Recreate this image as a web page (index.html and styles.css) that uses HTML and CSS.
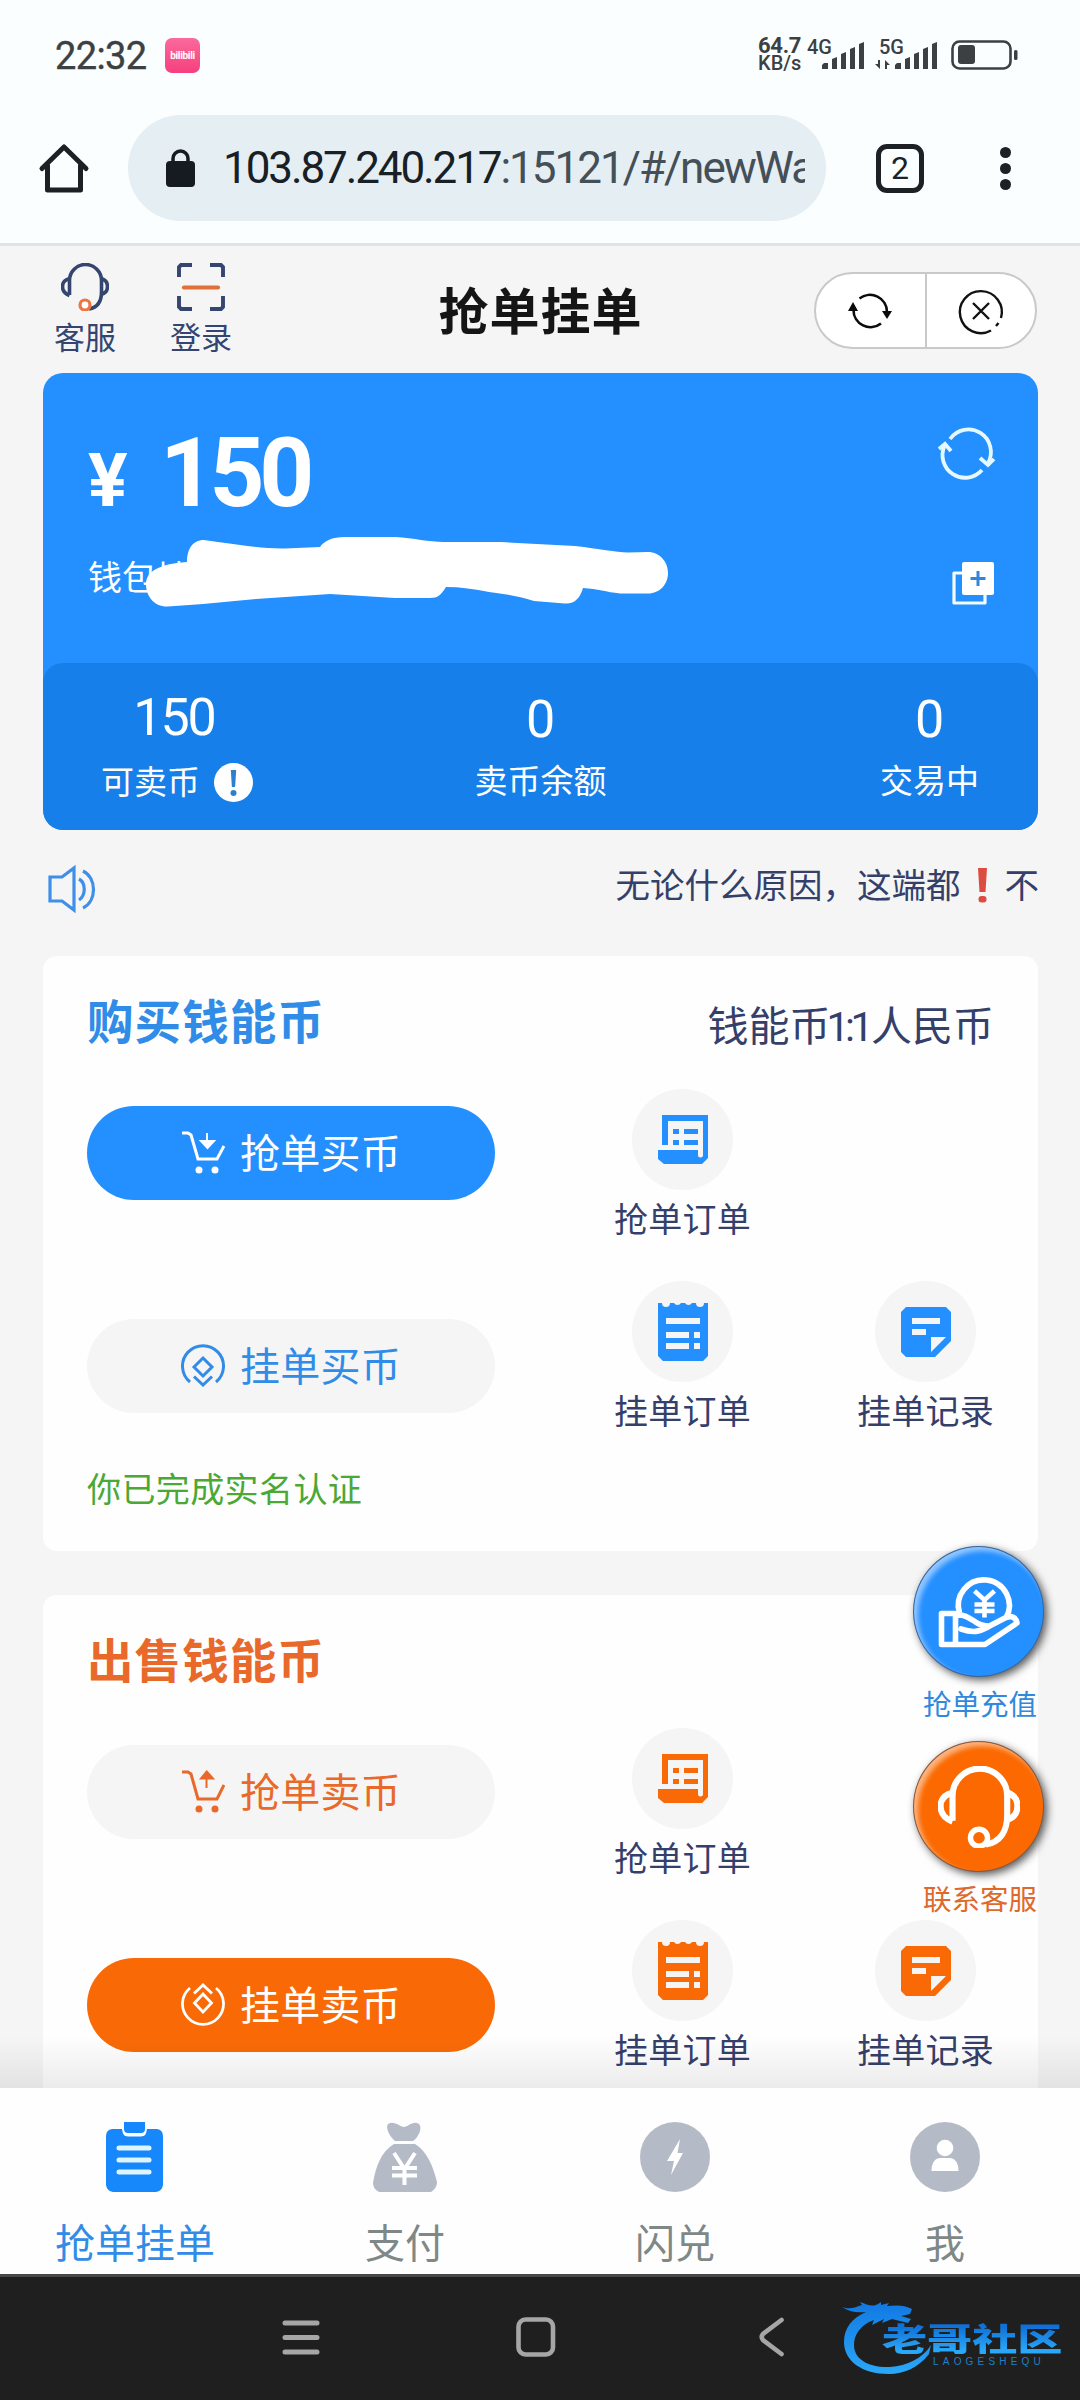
FILE: index.html
```html
<!DOCTYPE html>
<html lang="zh-CN">
<head>
<meta charset="utf-8">
<title>抢单挂单</title>
<link rel="stylesheet" href="styles.css">
</head>
<body>
<svg class="defs" width="0" height="0" aria-hidden="true">
  <symbol id="headset" viewBox="0 0 48 48">
    <path d="M8.500 32V17.500a15.500 15.500 0 0 1 32 0V29c0 9-4 15.500-12.500 17M8.500 15.500C3 17 1.500 20 1.500 23.500s2 7 7 9M40.500 15.500c4.500 1.500 6 4.500 6 8s-1.500 6.500-6 8" fill="none" stroke="currentColor" stroke-width="3.600"/>
    <circle cx="24" cy="42" r="5" fill="var(--mic-fill)" stroke="var(--mic)" stroke-width="3.200"/>
  </symbol>
  <symbol id="cart-in" viewBox="0 0 44 43">
    <path d="M1 2h6l3 2 7 24h19l7-13" fill="none" stroke="currentColor" stroke-width="3"/>
    <path d="M26 2v9M20 10h13l-6.500 7z" fill="currentColor" stroke="currentColor" stroke-width="2"/>
    <circle cx="18" cy="39" r="3.500" fill="currentColor"/><circle cx="34" cy="39" r="3.500" fill="currentColor"/>
  </symbol>
  <symbol id="cart-out" viewBox="0 0 44 43">
    <path d="M1 2h6l3 2 7 25h19l7-14" fill="none" stroke="currentColor" stroke-width="3"/>
    <path d="M25.500 18V8M20 8.500h12L25.700 1.500z" fill="currentColor" stroke="currentColor" stroke-width="2"/>
    <circle cx="18" cy="39" r="3.500" fill="currentColor"/><circle cx="34" cy="39" r="3.500" fill="currentColor"/>
  </symbol>
  <symbol id="coin-in" viewBox="0 0 44 43">
    <path d="M9 38A20.500 20.500 0 1 1 35 38M22 14l9 9-9 9-9-9zM13 32.500l9 8.500 9-8.500" fill="none" stroke="currentColor" stroke-width="3"/>
  </symbol>
  <symbol id="coin-out" viewBox="0 0 44 43">
    <path d="M9 5A20.500 20.500 0 1 0 35 5M22 11l8.500 9-8.500 9-8.500-9zM13 10.500L22 2l9 8.500" fill="none" stroke="currentColor" stroke-width="2.800"/>
  </symbol>
  <symbol id="scroll" viewBox="0 0 50 49">
    <path fill="currentColor" fill-rule="evenodd" d="M4 0h46v43l-6 6H6l-6-5V35h40v5a2.500 2.500 0 0 0 5 0V6H10v24H4zM15 14h6v5h-6zM26 14h14v5H26zM15 25h6v5h-6zM26 25h14v5H26z"/>
  </symbol>
  <symbol id="receipt" viewBox="0 0 50 58">
    <path fill="currentColor" fill-rule="evenodd" d="M0 0h4a4 4 0 0 0 8 0h4a4 4 0 0 0 7 0h4a4 4 0 0 0 7 0h4a4 4 0 0 0 8 0h4v53l-5 5H5l-5-5zM8 15v6h34v-6zM8 29v6h23v-6zM36 29v6h6v-6zM8 40v6h23v-6zM36 40v6h6v-6z"/>
  </symbol>
  <symbol id="note" viewBox="0 0 50 50">
    <path fill="currentColor" fill-rule="evenodd" d="M5 0h40l5 5v29L34 50H5l-5-5V5zM11 11v6h28v-6zM11 22v6h14v-6zM30 45l15-15H30z"/>
  </symbol>
</svg>

<div class="screen">
  <div class="statusbar">
    <span class="clock">22:32</span>
    <span class="app-icon">bilibili</span>
    <span class="speed"><b>64.7</b><b>KB/s</b></span>
    <svg class="signals" width="133" height="34" viewBox="0 0 133 34">
      <g fill="#3c4043">
        <text x="0" y="16" class="net">4G</text><text x="72" y="16" class="net">5G</text>
        <path d="M15 31v-4l2-2h4v6zM25 31V21l5-2v12zM34 31V16l5-2v17zM43 31V11l5-2v22zM52 31V6l5-2v27z"/>
        <path d="M88 31v-4l2-2h4v6zM98 31V21l5-2v12zM107 31V16l5-2v17zM116 31V11l5-2v22zM125 31V6l5-2v27z"/>
        <path d="M73 22v9l-5-5h3v-4zM78 31v-9l5 5h-3v4z"/>
      </g>
    </svg>
    <svg class="battery" width="68" height="30" viewBox="0 0 68 30">
      <rect x="1.500" y="1.500" width="58" height="27" rx="7" fill="none" stroke="#3c4043" stroke-width="2.600"/>
      <rect x="7" y="5" width="17" height="19" rx="3" fill="#3c4043"/><rect x="63" y="10" width="3.500" height="10" rx="1.500" fill="#3c4043"/>
    </svg>
  </div>

  <div class="browserbar">
    <svg class="home" width="50" height="50" viewBox="0 0 50 50"><path d="M3 25.500L25 4l22 21.500M8.500 22v25h33V22" fill="none" stroke="#1d2125" stroke-width="5" stroke-linejoin="round" stroke-linecap="round"/></svg>
    <div class="address">
      <svg width="30" height="38" viewBox="0 0 30 38"><rect x="0" y="12" width="29" height="26" rx="4" fill="#151b20"/><path d="M7 14V9.500a7.500 7.500 0 0 1 15 0V14" fill="none" stroke="#151b20" stroke-width="3.500"/></svg>
      <div class="url"><span class="host">103.87.240.217</span><span class="path">:15121/#/newWa</span></div>
    </div>
    <div class="tabcount">2</div>
    <div class="dots"><i></i><i></i><i></i></div>
  </div>

  <main class="page">
    <header class="header">
      <div class="shortcuts">
        <div class="shortcut"><svg class="mic-orange" width="48" height="48"><use href="#headset"/></svg><span>客服</span></div>
        <div class="shortcut"><svg width="48" height="48" viewBox="0 0 48 48"><path d="M2 14V4l2-2h11M33 2h11l2 2v10M46 33v11l-2 2H33M15 46H4l-2-2V33" fill="none" stroke="#34456f" stroke-width="3.900"/><path d="M7 24.500h34" stroke="#df7039" stroke-width="4.200" stroke-linecap="round"/></svg><span>登录</span></div>
      </div>
      <h1>抢单挂单</h1>
      <div class="capsule">
        <span><svg width="44" height="44" viewBox="0 0 44 44"><g fill="none" stroke="#0b0b0b" stroke-width="2.600"><path d="M11.500 9.500A17 17 0 0 1 39 23"/><path d="M33 34.500A17 17 0 0 1 5.500 21"/></g><path d="M34 22h10l-5 8zM0 22h10l-5-9z" fill="#0b0b0b"/></svg></span>
        <span><svg width="46" height="46" viewBox="0 0 46 46"><path d="M33 42.500A21 21 0 1 1 43 30M38 38l2.500-3M15 15l16 16M31 15L15 31" fill="none" stroke="#111" stroke-width="2.400"/></svg></span>
      </div>
    </header>

    <section class="balance">
      <div class="balance-main">
        <div class="balance-info">
          <div class="amount"><span class="yen">¥</span><span class="sum">150</span></div>
          <div class="wallet">钱包地
            <svg class="scribble" width="524" height="72" viewBox="146 536 524 72"><path fill="#fff" d="M146 584C146 572 158 564 187 562C187 550 192 540 204 540C235 544 260 549 285 548.500L320 547C324 541 332 537 345 537H395C415 538 428 542 444 542H501L575 546C600 549 615 552 628 552.500L648 552C660 552 668 562 668 573S660 593.500 648 593.500H620C606 592 598 589 583 588C580 598 575 604 565 603.500L534 601C518 596 505 594 489 592C475 589 460 587 446 587C441 595 438 598 430 598H395L330 594L256 599L203 604L168 606.500C154 607 146 596 146 584Z"/></svg>
          </div>
        </div>
        <div class="balance-tools">
          <svg width="56" height="50" viewBox="0 0 56 50"><g fill="none" stroke="#e4f8ff" stroke-width="3.800"><path d="M12 9A22.500 22.500 0 0 1 50 33M44 40A22.500 22.500 0 0 1 6.500 16"/><path d="M42 28l8 7 6-6M1 19l6-5 6 7"/></g></svg>
          <svg width="42" height="43" viewBox="0 0 42 43"><path d="M10 11H2v30h31v-9" fill="none" stroke="#f2fcff" stroke-width="3.200" stroke-linejoin="round"/><rect x="10" y="0" width="32" height="33" rx="2" fill="#fff"/><path d="M26 9v15M18.500 16.500h15" stroke="#2f86dc" stroke-width="3"/></svg>
        </div>
      </div>
      <div class="stats">
        <div class="stat first"><b class="n150">150</b><span>可卖币<i class="info"><svg width="39" height="39" viewBox="0 0 39 39"><circle cx="19.500" cy="19.500" r="19.500" fill="#fff"/><path d="M16.800 7h5.400l-1.100 17h-3.200z" fill="#2f7fd0"/><circle cx="19.500" cy="30" r="3" fill="#2f7fd0"/></svg></i></span></div>
        <div class="stat"><b>0</b><span>卖币余额</span></div>
        <div class="stat last"><b>0</b><span>交易中</span></div>
      </div>
    </section>

    <div class="notice">
      <svg width="48" height="46" viewBox="0 0 48 46"><path d="M2 11h12L26 2v42L14 35H2zM31 13c7 4 7 16 0 21M35 5c14 7 14 30 0 37" fill="none" stroke="#3f8fe8" stroke-width="3.200"/></svg>
      <p>无论什么原因，这端都<svg class="bang" width="44" height="35" viewBox="0 0 44 35"><path d="M17 0h9l-1.500 24h-6z" fill="#dc4c41"/><rect x="17.500" y="28" width="8" height="6.500" rx="3" fill="#dc4c41"/></svg>不</p>
    </div>

    <section class="trade buy">
      <div class="trade-head"><h2>购买钱能币</h2><span>钱能币<em>1:1</em>人民币</span></div>
      <div class="row">
        <div class="btn solid"><svg width="44" height="43"><use href="#cart-in"/></svg>抢单买币</div>
        <div class="link"><i><svg width="50" height="49"><use href="#scroll"/></svg></i>抢单订单</div>
      </div>
      <div class="row second">
        <div class="btn"><svg width="44" height="43"><use href="#coin-in"/></svg>挂单买币</div>
        <div class="link"><i><svg width="50" height="58"><use href="#receipt"/></svg></i>挂单订单</div>
        <div class="link"><i><svg width="50" height="50"><use href="#note"/></svg></i>挂单记录</div>
      </div>
      <p class="verified">你已完成实名认证</p>
    </section>

    <section class="trade sell">
      <div class="trade-head"><h2>出售钱能币</h2></div>
      <div class="row">
        <div class="btn"><svg width="44" height="43"><use href="#cart-out"/></svg>抢单卖币</div>
        <div class="link"><i><svg width="50" height="49"><use href="#scroll"/></svg></i>抢单订单</div>
      </div>
      <div class="row second">
        <div class="btn solid"><svg width="44" height="43"><use href="#coin-out"/></svg>挂单卖币</div>
        <div class="link"><i><svg width="50" height="58"><use href="#receipt"/></svg></i>挂单订单</div>
        <div class="link"><i><svg width="50" height="50"><use href="#note"/></svg></i>挂单记录</div>
      </div>
    </section>

    <div class="shade"></div>

    <aside class="floats">
      <div class="float recharge">
        <i><svg width="80" height="73" viewBox="0 0 80 73"><g fill="none" stroke="#fff" stroke-width="5.600" stroke-linejoin="round"><path d="M20.500 38A25.500 25.500 0 1 1 67 43"/><path d="M2.500 38.500h14v31h-14zM16.500 40c9-1 14 3 20 7 4 3 7 4 14 4L66 43c6-3 11-1 12 5L46 69.500H16.500"/><path d="M22 54c12 4 18 3 27-2" stroke-linecap="round"/></g><path d="M35.500 16l10 9 10-9M35.500 29.500h20M35.500 36h20M45.500 25v17.500" fill="none" stroke="#fff" stroke-width="4.600"/></svg></i>
        <span>抢单充值</span>
      </div>
      <div class="float contact">
        <i><svg width="82" height="84" viewBox="0 0 48 48"><use href="#headset" width="48" height="48"/></svg></i>
        <span>联系客服</span>
      </div>
    </aside>
  </main>

  <nav class="tabbar">
    <div class="tab active"><svg width="57" height="70" viewBox="0 0 57 70"><path d="M6 7h10c1 7 3 7.500 8 7.500h9c5 0 7-.5 8-7.500h10q6 1 6 7v49q-1 6-7 7H7q-6-1-7-7V14q0-6 6-7z" fill="#1688fb"/><path d="M18 0h21v7q0 4-4 4H22q-4 0-4-4z" fill="#1688fb"/><path d="M13 26h30M13 38h30M13 50h30" stroke="#dcf5ff" stroke-width="5" stroke-linecap="round"/></svg><span>抢单挂单</span></div>
    <div class="tab"><svg width="64" height="70" viewBox="0 0 64 70"><path d="M15 2c6-4 12 3 16 3s9-7 15-3c4 4-1 14-6 17H22C17 15 12 6 15 2zM21 22h21c12 7 18 22 22 38 0 5-3 8-6 10H6c-4-2-6-5-6-9 3-17 8-31 21-39z" fill="#b5bac7"/><path d="M21 31l10.500 16L42 31M19 46h25M19 53.500h25M31.500 46v17" fill="none" stroke="#fff" stroke-width="4"/></svg><span>支付</span></div>
    <div class="tab"><svg width="70" height="70" viewBox="0 0 70 70"><circle cx="35" cy="35" r="35" fill="#b5bac7"/><path d="M40 17l-13 22h7l-3 14 12-22h-5.500z" fill="#fff"/></svg><span>闪兑</span></div>
    <div class="tab"><svg width="70" height="70" viewBox="0 0 70 70"><circle cx="35" cy="35" r="35" fill="#b5bac7"/><circle cx="35" cy="26" r="8.300" fill="#fff"/><path d="M21.500 49c0-9 4-13 9-13h9c5 0 9 4 9 13z" fill="#fff"/></svg><span>我</span></div>
  </nav>

  <div class="sysnav">
    <svg width="38" height="36" viewBox="0 0 38 36"><path d="M3 4h32M3 18.500h32M3 33h32" stroke="#a6a6a6" stroke-width="5" stroke-linecap="round"/></svg>
    <svg width="40" height="40" viewBox="0 0 40 40"><rect x="2.500" y="2.500" width="34.500" height="35" rx="7" fill="none" stroke="#a6a6a6" stroke-width="4.600"/></svg>
    <svg width="26" height="40" viewBox="0 0 26 40"><path d="M22.500 3L4 17q-2.500 3 0 6l18.500 14" fill="none" stroke="#a6a6a6" stroke-width="4.600" stroke-linecap="round"/></svg>
    <div class="brand">
      <svg width="92" height="72" viewBox="0 0 92 72"><defs><linearGradient id="dragon" x1="0" y1="0" x2="0" y2="1"><stop offset="0" stop-color="#1178e2"/><stop offset="1" stop-color="#2aa8f8"/></linearGradient></defs>
        <path fill="url(#dragon)" d="M0 6c8 3 14 0 20-2l-2-3c8 3 12 5 18 2l3-2v3l8-2-2 3c10-1 18-1 25 3l-2 5-9 2 10 3-3 4-16-4-10 4 2-4-12 6 2-5C18 24 12 34 12 44c0 15 16 23 36 22 17-1 33-9 41-22l-2 9C76 67 62 73 47 73 20 73 2 60 2 41 2 27 10 17 24 11 15 12 8 11 0 6z"/></svg>
      <div class="brand-text"><b>老哥社区</b><small>LAOGESHEQU</small></div>
    </div>
  </div>
</div>
</body>
</html>
```

FILE: styles.css
```css
* { box-sizing: border-box; margin: 0; padding: 0; }
body { width: 1080px; height: 2400px; overflow: hidden; background: #f5f5f5; font-family: "Noto Sans CJK SC", sans-serif; color: #34406a; }
i, em { font-style: normal; }
svg { display: block; flex: none; overflow: visible; }
.defs { position: absolute; }
.screen { display: flex; flex-direction: column; width: 1080px; height: 2400px; }

/* status bar */
.statusbar { display: flex; align-items: flex-start; height: 108px; flex: none; padding: 38px 0 0 55px; background: #fafeff; color: #3c4043; font-family: Roboto, sans-serif; }
.clock { width: 110px; font-size: 38px; line-height: 36px; letter-spacing: -.6px; -webkit-text-stroke: .4px #3c4043; }
.app-icon { width: 35px; height: 35px; border-radius: 7px; background: linear-gradient(#fb6a9c, #f63f7d); color: #fff; font-size: 10px; font-weight: 700; line-height: 36px; text-align: center; letter-spacing: -.3px; }
.speed { display: flex; flex-direction: column; width: 49px; margin-left: 558px; }
.speed b { font-size: 22px; line-height: 16px; letter-spacing: -.3px; font-weight: 700; }
.speed b + b { font-size: 20px; font-weight: 500; line-height: 18px; letter-spacing: 0; }
.net { font: 500 20px Roboto, sans-serif; }
.battery { margin: 2px 0 0 11px; }

/* browser bar */
.browserbar { display: flex; align-items: center; height: 138px; flex: none; padding: 0 0 15px 39px; background: #fafeff; border-bottom: 3px solid #dde3e8; }
.address { display: flex; align-items: center; width: 698px; height: 106px; margin-left: 39px; padding: 0 21px 0 38px; border-radius: 53px; background: #e4eef3; }
.url { flex: 1; margin-left: 27px; overflow: hidden; white-space: nowrap; font-family: Roboto, sans-serif; font-size: 44px; line-height: 60px; }
.host { color: #182025; letter-spacing: -2.100px; }
.path { color: #454f57; letter-spacing: -2px; }
.tabcount { width: 48px; height: 49px; margin-left: 50px; border: 5px solid #1d2125; border-radius: 11px; font: 32px/39px Roboto, sans-serif; color: #1d2125; text-align: center; }
.dots { display: flex; flex-direction: column; gap: 5px; margin-left: 76px; }
.dots i { width: 11px; height: 11px; border-radius: 50%; background: #1d2125; }

/* page */
.page { position: relative; height: 1842px; flex: none; overflow: hidden; }
.header { display: grid; grid-template-columns: 1fr auto 1fr; height: 127px; padding: 0 43px 0 54px; }
.shortcuts { display: flex; gap: 54px; padding-top: 17px; }
.shortcut { display: flex; flex-direction: column; align-items: center; width: 62px; color: #34456f; }
.shortcut span { margin-top: 9px; font-size: 31px; line-height: 31px; white-space: nowrap; }
.mic-orange { --mic: #ee7440; --mic-fill: #fff; }
h1 { padding-top: 37px; margin: 0 5px 0 -5px; font-size: 50px; line-height: 50px; letter-spacing: 1px; color: #151515; font-weight: 700; }
.capsule { display: flex; justify-self: end; width: 223px; height: 77px; margin-top: 26px; border: 2px solid #c9c9c9; border-radius: 39px; background: #fff; }
.capsule span { display: flex; flex: 1; align-items: center; justify-content: center; }
.capsule span + span { border-left: 2px solid #c9c9c9; }

/* balance card */
.balance { margin: 0 42px 0 43px; border-radius: 20px; background: #248fff; overflow: hidden; color: #fff; }
.balance-main { display: flex; justify-content: space-between; height: 290px; padding: 0 44px 0 45px; }
.balance-info { padding-top: 52px; }
.amount { display: flex; align-items: baseline; height: 96px; font: 700 96px/96px Roboto, sans-serif; }
.yen { width: 72px; font-size: 74px; }
.sum { letter-spacing: -5.500px; }
.wallet { position: relative; margin-top: 35px; font-size: 34px; line-height: 40px; }
.scribble { position: absolute; left: 58px; top: -20px; }
.balance-tools { display: flex; flex-direction: column; align-items: flex-end; gap: 82px; padding-top: 57px; }
.stats { display: grid; grid-template-columns: 1fr auto 1fr; height: 167px; padding: 0 59px; border-radius: 20px; background: #177fe9; }
.stat { display: flex; flex-direction: column; align-items: center; padding-top: 31px; }
.stat b { font: 400 52px/52px Roboto, sans-serif; }
.stat .n150 { margin: -2px 0 2px -6px; letter-spacing: -2px; }
.stat span { display: flex; align-items: center; margin-top: 14px; font-size: 33px; line-height: 38px; white-space: nowrap; }
.first { justify-self: start; margin-left: -1px; }
.last { justify-self: end; }
.info { margin: 3px 0 -3px 14px; }

/* notice */
.notice { display: flex; justify-content: space-between; height: 126px; padding: 36px 41px 0 48px; }
.notice p { display: flex; font-size: 34.500px; line-height: 34px; }
.bang { margin-top: 2px; }

/* trade cards */
.trade { height: 595px; margin: 0 42px 44px 43px; padding: 0 44px; border-radius: 14px; background: #fefefe; }
.trade-head { display: flex; justify-content: space-between; height: 133px; padding-top: 36px; }
.trade h2 { font-size: 46.500px; line-height: 54px; font-weight: 700; letter-spacing: 1.100px; color: var(--t); white-space: nowrap; }
.trade-head span { font-size: 41px; line-height: 63px; white-space: nowrap; }
.trade-head em { font: 41px Roboto, sans-serif; letter-spacing: -4.500px; margin: 0 2px 0 -4px; }
.buy { --c: #248fff; --t: #318ce7; }
.sell { --c: #f96a07; --t: #e8692a; }
.row { display: grid; grid-template-columns: 408px 139px 139px; height: 192px; }
.row .link:nth-child(2) { margin-left: 118px; }
.row .link:nth-child(3) { margin-left: 222px; }
.btn { display: flex; align-items: center; justify-content: center; gap: 15px; height: 94px; margin-top: 17px; padding-bottom: 4px; border-radius: 47px; background: #f5f5f5; color: var(--t); font-size: 40px; letter-spacing: .2px; white-space: nowrap; }
.btn svg { position: relative; top: 1px; }
.second .btn { margin-top: 38px; }
.btn.solid { background: var(--c); color: #fff; }
.link { display: flex; flex-direction: column; align-items: center; width: 139px; font-size: 34px; line-height: 40px; white-space: nowrap; letter-spacing: .3px; }
.link i { display: flex; align-items: center; justify-content: center; width: 101px; height: 101px; margin-bottom: 8px; border-radius: 50%; background: #f5f5f5; color: var(--c); }
.verified { margin-top: -5px; font-size: 34px; line-height: 40px; letter-spacing: .4px; color: #4ba834; }
.shade { position: absolute; left: 0; right: 0; bottom: 0; height: 52px; background: linear-gradient(rgba(0,0,0,0), rgba(0,0,0,.075)); }

/* floating actions */
.floats { position: absolute; right: 36px; top: 1300px; width: 131px; display: flex; flex-direction: column; gap: 19px; }
.float { display: flex; flex-direction: column; height: 176px; }
.float i { display: flex; align-items: center; justify-content: center; width: 131px; height: 131px; flex: none; border: 1px solid rgba(70,80,100,.65); border-radius: 50%; box-shadow: 3px 3px 8px rgba(0,0,0,.65), inset 4px 4px 5px rgba(255,255,255,.5); }
.float span { margin: 8px 0 0 10px; font-size: 28.500px; line-height: 36px; white-space: nowrap; }
.recharge i { background: #248fff; }
.recharge span { color: #3089dc; }
.contact i { background: #fb6900; color: #fff; --mic: #fff; --mic-fill: #fb6900; }
.contact span { color: #df692c; }

/* bottom bars */
.tabbar { display: grid; grid-template-columns: repeat(4, 270px); height: 186px; flex: none; background: #fefefe; }
.tab { display: flex; flex-direction: column; align-items: center; padding-top: 34px; color: #7e8886; }
.tab span { margin-top: 24px; font-size: 40px; line-height: 50px; }
.tab.active { color: #318ce7; }
.tab.active svg { margin-left: -1px; }
.sysnav { display: flex; align-items: center; height: 126px; flex: none; padding: 0 0 4px 282px; background: #1f1f1f; border-top: 3px solid #474747; }
.sysnav > svg:nth-child(2) { margin-left: 196px; }
.sysnav > svg:nth-child(3) { margin-left: 203px; }
.brand { display: flex; margin-left: 57px; width: 224px; height: 72px; }
.brand-text { display: flex; flex-direction: column; width: 182px; margin: 19px 0 0 -52px; color: #1b91f0; }
.brand-text b { width: 130px; font-size: 32px; line-height: 34px; font-weight: 900; white-space: nowrap; transform: scaleX(1.41); transform-origin: 0 0; background: linear-gradient(#0f71d8 20%, #2aa8f8 90%); -webkit-background-clip: text; background-clip: text; color: transparent; }
.brand-text small { margin: 1px 0 0 51px; font: 10px/14px "Liberation Sans", sans-serif; letter-spacing: 4.200px; color: #1f7fc4; }
```
